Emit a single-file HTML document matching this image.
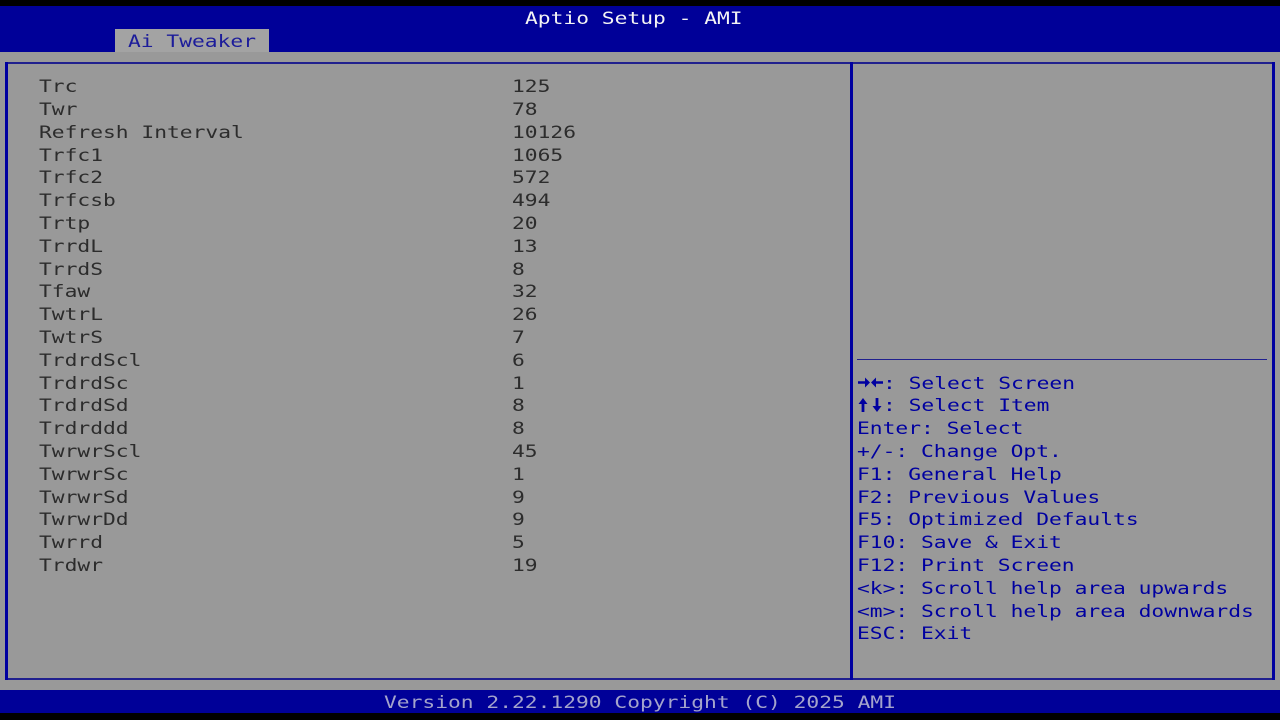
<!DOCTYPE html>
<html><head><meta charset="utf-8">
<style>
html,body{margin:0;padding:0;width:1280px;height:720px;overflow:hidden;background:#000}
#s{position:relative;width:1280px;height:720px;background:#000;overflow:hidden}
.b{position:absolute}
.t{position:absolute;margin-top:.5px;font-family:"DejaVu Sans Mono",monospace;font-size:17px;line-height:22px;white-space:pre;transform-origin:0 0;transform:scaleX(1.2507);color:#2c2c2c;filter:blur(.3px)}
.h{color:#0000a0}
.w{color:#f4f4f4}
.a{color:#1c1c9a}
.f{color:#a4a4cc}
</style></head><body><div id="s">
<div class="b" style="left:0;top:6px;width:1280px;height:46px;background:#000098"></div>
<div class="b" style="left:0;top:52px;width:1280px;height:638px;background:#999"></div>
<div class="b" style="left:0;top:690px;width:1280px;height:23px;background:#000098"></div>
<div class="b" style="left:115px;top:29px;width:154px;height:23px;background:#a3a3a3"></div>
<div class="b" style="left:5px;top:62px;width:1270px;height:2px;background:#20208e"></div>
<div class="b" style="left:5px;top:678px;width:1270px;height:2px;background:#20208e"></div>
<div class="b" style="left:5px;top:62px;width:3px;height:618px;background:#0000a0"></div>
<div class="b" style="left:850px;top:62px;width:3px;height:618px;background:#0000a0"></div>
<div class="b" style="left:1272px;top:62px;width:3px;height:618px;background:#0000a0"></div>
<div class="b" style="left:857px;top:358.5px;width:410px;height:1.5px;background:#20208e"></div>

<div class="t w" style="left:524.8px;top:7px">Aptio Setup - AMI</div>
<div class="t a" style="left:128px;top:30px">Ai Tweaker</div>

<div class="t" style="left:38.6px;top:75px">Trc</div><div class="t" style="left:512px;top:75px">125</div>
<div class="t" style="left:38.6px;top:98px">Twr</div><div class="t" style="left:512px;top:98px">78</div>
<div class="t" style="left:38.6px;top:121px">Refresh Interval</div><div class="t" style="left:512px;top:121px">10126</div>
<div class="t" style="left:38.6px;top:144px">Trfc1</div><div class="t" style="left:512px;top:144px">1065</div>
<div class="t" style="left:38.6px;top:166px">Trfc2</div><div class="t" style="left:512px;top:166px">572</div>
<div class="t" style="left:38.6px;top:189px">Trfcsb</div><div class="t" style="left:512px;top:189px">494</div>
<div class="t" style="left:38.6px;top:212px">Trtp</div><div class="t" style="left:512px;top:212px">20</div>
<div class="t" style="left:38.6px;top:235px">TrrdL</div><div class="t" style="left:512px;top:235px">13</div>
<div class="t" style="left:38.6px;top:258px">TrrdS</div><div class="t" style="left:512px;top:258px">8</div>
<div class="t" style="left:38.6px;top:280px">Tfaw</div><div class="t" style="left:512px;top:280px">32</div>
<div class="t" style="left:38.6px;top:303px">TwtrL</div><div class="t" style="left:512px;top:303px">26</div>
<div class="t" style="left:38.6px;top:326px">TwtrS</div><div class="t" style="left:512px;top:326px">7</div>
<div class="t" style="left:38.6px;top:349px">TrdrdScl</div><div class="t" style="left:512px;top:349px">6</div>
<div class="t" style="left:38.6px;top:372px">TrdrdSc</div><div class="t" style="left:512px;top:372px">1</div>
<div class="t" style="left:38.6px;top:394px">TrdrdSd</div><div class="t" style="left:512px;top:394px">8</div>
<div class="t" style="left:38.6px;top:417px">Trdrddd</div><div class="t" style="left:512px;top:417px">8</div>
<div class="t" style="left:38.6px;top:440px">TwrwrScl</div><div class="t" style="left:512px;top:440px">45</div>
<div class="t" style="left:38.6px;top:463px">TwrwrSc</div><div class="t" style="left:512px;top:463px">1</div>
<div class="t" style="left:38.6px;top:486px">TwrwrSd</div><div class="t" style="left:512px;top:486px">9</div>
<div class="t" style="left:38.6px;top:508px">TwrwrDd</div><div class="t" style="left:512px;top:508px">9</div>
<div class="t" style="left:38.6px;top:531px">Twrrd</div><div class="t" style="left:512px;top:531px">5</div>
<div class="t" style="left:38.6px;top:554px">Trdwr</div><div class="t" style="left:512px;top:554px">19</div>

<svg class="b" style="left:857px;top:374px" width="28" height="42" viewBox="0 0 28 42" fill="#0000a0" stroke="none">
<path d="M1 7.3H8V3.5L13 8.5L8 13.5V9.7H1Z"/>
<path d="M26 7.3H19V3.5L14 8.5L19 13.5V9.7H26Z"/>
<path d="M4.6 38V30H1.5L6 24L10.5 30H7.4V38Z"/>
<path d="M18.6 24V32H15.5L20 38L24.5 32H21.4V24Z"/>
</svg>
<div class="t h" style="left:883px;top:372px">: Select Screen</div>
<div class="t h" style="left:883px;top:394px">: Select Item</div>
<div class="t h" style="left:857.2px;top:417px">Enter: Select</div>
<div class="t h" style="left:857.2px;top:440px">+/-: Change Opt.</div>
<div class="t h" style="left:857.2px;top:463px">F1: General Help</div>
<div class="t h" style="left:857.2px;top:486px">F2: Previous Values</div>
<div class="t h" style="left:857.2px;top:508px">F5: Optimized Defaults</div>
<div class="t h" style="left:857.2px;top:531px">F10: Save &amp; Exit</div>
<div class="t h" style="left:857.2px;top:554px">F12: Print Screen</div>
<div class="t h" style="left:857.2px;top:577px">&lt;k&gt;: Scroll help area upwards</div>
<div class="t h" style="left:857.2px;top:600px">&lt;m&gt;: Scroll help area downwards</div>
<div class="t h" style="left:857.2px;top:622px">ESC: Exit</div>

<div class="t f" style="left:384px;top:691px">Version 2.22.1290 Copyright (C) 2025 AMI</div>
</div></body></html>
